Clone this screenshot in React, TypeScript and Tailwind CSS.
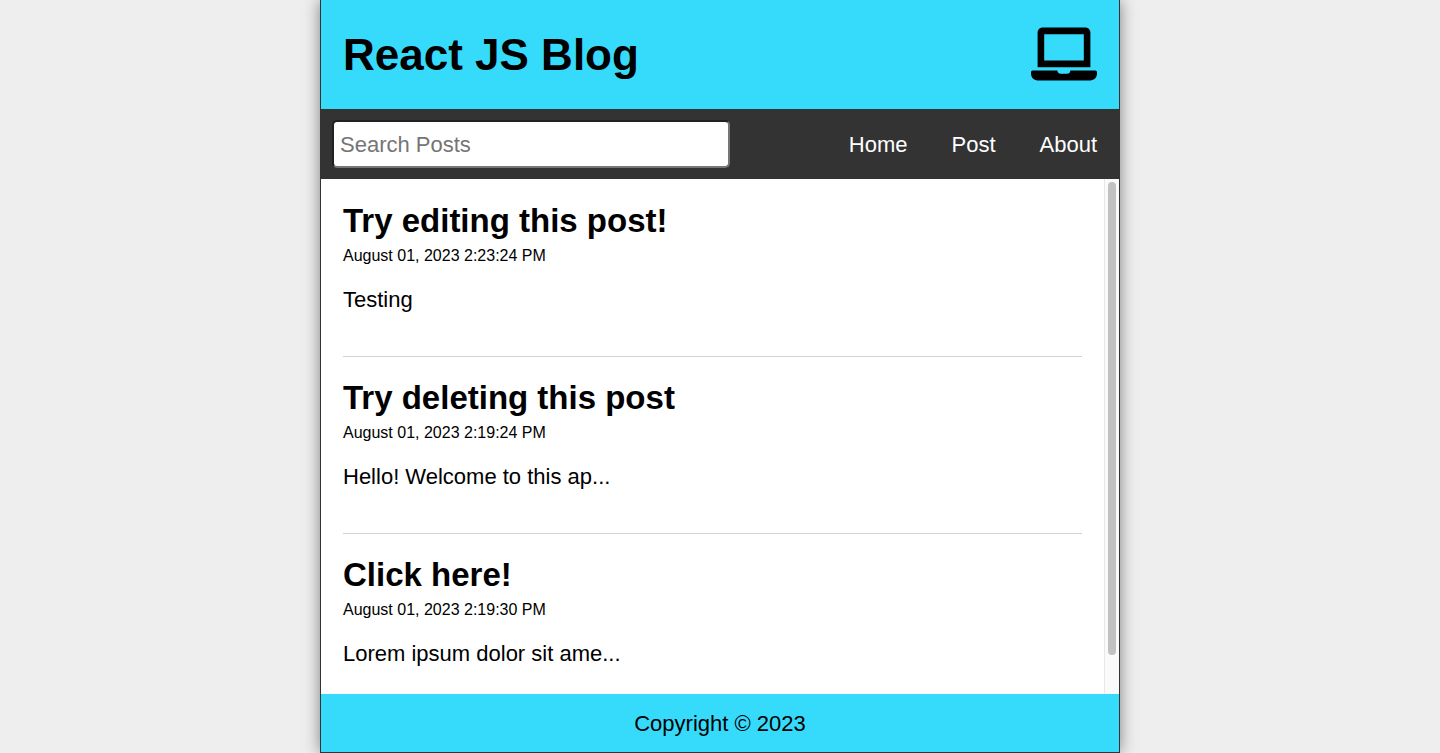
import React, { useState } from "react";
import { FaLaptop } from "react-icons/fa";

const posts = [
  { id: 1, title: "Try editing this post!", date: "August 01, 2023 2:23:24 PM", body: "Testing" },
  { id: 2, title: "Try deleting this post", date: "August 01, 2023 2:19:24 PM", body: "Hello! Welcome to this ap..." },
  { id: 3, title: "Click here!", date: "August 01, 2023 2:19:30 PM", body: "Lorem ipsum dolor sit ame..." },
];

const links = ["Home", "Post", "About"];

function Header() {
  return (
    <header className="flex items-center justify-between bg-[#36dbfc] px-[22px] pt-[21px] pb-[22px]">
      <h1 className="pt-0.5 text-[44px] leading-[64px] font-bold">React JS Blog</h1>
      <FaLaptop className="size-[66px]" aria-hidden="true" />
    </header>
  );
}

function Nav() {
  const [search, setSearch] = useState("");
  return (
    <nav className="flex items-center justify-between bg-[#333] py-[11px] pr-[22px] pl-[11px] text-white">
      <form className="w-[52%]" onSubmit={(e) => e.preventDefault()}>
        <input
          id="search"
          type="text"
          aria-label="Search Posts"
          placeholder="Search Posts"
          value={search}
          onChange={(e) => setSearch(e.target.value)}
          className="block h-12 w-full rounded-[5px] border-2 border-[#767676] [border-style:inset] bg-white px-[6px] pt-0.5 text-[22px] text-black placeholder:text-[#757575]"
        />
      </form>
      <ul className="flex gap-11">
        {links.map((l) => (
          <li key={l}><a href="#" className="leading-[33px]">{l}</a></li>
        ))}
      </ul>
    </nav>
  );
}

function Feed() {
  return (
    <div className="flex min-h-0 grow bg-white">
      <main className="grow overflow-hidden px-[22px] pt-px">
        {posts.map((p) => (
          <article key={p.id} className="mt-[22px] border-b border-[#d3d3d3] pb-[43px]">
            <a href="#">
              <h2 className="text-[33px] leading-[38px] font-bold">{p.title}</h2>
              <p className="mt-[5px] mb-5 text-[16px] leading-[22px]">{p.date}</p>
            </a>
            <p className="leading-[26px]">{p.body}</p>
          </article>
        ))}
      </main>
      <div className="w-[15px] shrink-0 border-l border-[#e8e8e8] bg-[#fafafa] py-[3px] pl-[3px]" aria-hidden="true">
        <div className="h-[93%] w-2 rounded-full bg-[#c1c1c1]" />
      </div>
    </div>
  );
}

export default function App() {
  return (
    <div className="h-screen overflow-hidden bg-[#eee] font-['Liberation_Sans',Arial,sans-serif] text-[22px] text-black">
      <div className="mx-auto flex h-full max-w-[800px] flex-col border border-t-0 border-[#333] shadow-[0_0_15px_0_#808080]">
        <Header />
        <Nav />
        <Feed />
        <footer className="bg-[#36dbfc] pt-[14px] pb-3 text-center leading-8">Copyright © 2023</footer>
      </div>
    </div>
  );
}
